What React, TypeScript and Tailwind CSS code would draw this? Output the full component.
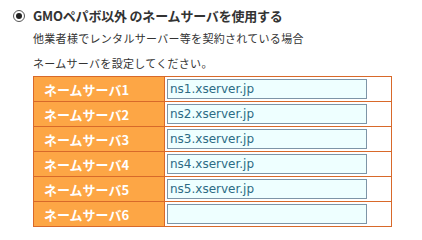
const servers = ["ns1.xserver.jp", "ns2.xserver.jp", "ns3.xserver.jp", "ns4.xserver.jp", "ns5.xserver.jp", ""];

export default function App() {
  return (
    <div
      className="w-[422px] h-[233px] overflow-hidden bg-white text-[#333]"
      style={{ fontFamily: '"Noto Sans CJK JP", "DejaVu Sans", sans-serif' }}
    >
      <div className="pt-[8px] pl-[13px]">
        {/* Radio heading */}
        <label className="flex items-center gap-[8px] h-[15px]">
          <span className="w-[12px] h-[12px] rounded-full border border-[#555] flex items-center justify-center bg-white">
            <span className="w-[6px] h-[6px] rounded-full bg-[#222]" />
          </span>
          <span className="text-[13px] font-bold leading-none tracking-[-0.2px]">GMOペパボ以外 のネームサーバを使用する</span>
        </label>

        <div className="pl-[20px]">
          <p className="mt-[10px] text-[11px] leading-none tracking-[0.3px]">他業者様でレンタルサーバー等を契約されている場合</p>
          <p className="mt-[14px] text-[11px] leading-none tracking-[0.3px]">ネームサーバを設定してください。</p>

          <table className="mt-[7px] border-collapse w-[359px]">
            <tbody>
              {servers.map((s, i) => (
                <tr key={i} className="h-[25px]">
                  <th className="w-[131px] border border-[#d8692a] bg-[#fda645] text-left pl-[10px] text-white text-[13px] font-bold leading-none">
                    ネームサーバ{i + 1}
                  </th>
                  <td className="border border-[#d8692a] pl-[2px] py-0">
                    <input
                      readOnly
                      value={s}
                      className="block w-[200px] h-[20px] border border-[#7d95a7] bg-[#eeffff] px-[2px] text-[12px] text-[#2c6b84] outline-none"
                      style={{ fontFamily: '"DejaVu Sans", Verdana, sans-serif' }}
                    />
                  </td>
                </tr>
              ))}
            </tbody>
          </table>
        </div>
      </div>
    </div>
  );
}
